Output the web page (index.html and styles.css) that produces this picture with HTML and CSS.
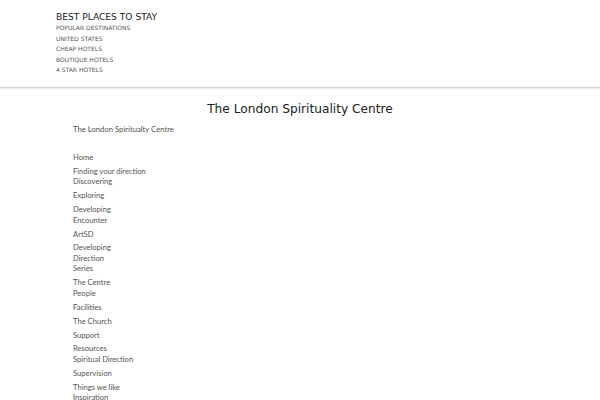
FILE: index.html
```html
<!DOCTYPE html>
<html lang="en">
  <head>
    <meta charset="UTF-8" />
    <meta name="viewport" content="width=device-width, initial-scale=1.0" />
    <title>The London Spirituality Centre</title>
    <link rel="stylesheet" href="styles.css">
  </head>
  <body>
    <header class="topbar">
      <div class="topbar-inner">
        <h3 class="brand">BEST PLACES TO STAY</h3>
        <ul class="top-links">
          <li><a href="#">POPULAR DESTINATIONS</a></li>
          <li><a href="#">UNITED STATES</a></li>
          <li><a href="#">CHEAP HOTELS</a></li>
          <li><a href="#">BOUTIQUE HOTELS</a></li>
          <li><a href="#">4 STAR HOTELS</a></li>
        </ul>
      </div>
    </header>
    <main class="container">
      <h1 class="title">The London Spirituality Centre</h1>
      <p class="site-name">The London Spiritualty Centre</p>
      <ul class="menu">
        <li><a href="#">Home</a></li>
        <li><a href="#">Finding your direction</a><a href="#">Discovering</a></li>
        <li><a href="#">Exploring</a></li>
        <li><a href="#">Developing</a><a href="#">Encounter</a></li>
        <li><a href="#">ArtSD</a></li>
        <li><a href="#">Developing</a><a href="#">Direction</a><a href="#">Series</a></li>
        <li><a href="#">The Centre</a><a href="#">People</a></li>
        <li><a href="#">Facilities</a></li>
        <li><a href="#">The Church</a></li>
        <li><a href="#">Support</a></li>
        <li><a href="#">Resources</a><a href="#">Spiritual Direction</a></li>
        <li><a href="#">Supervision</a></li>
        <li><a href="#">Things we like</a><a href="#">Inspiration</a></li>
      </ul>
    </main>
  </body>
</html>
```

FILE: styles.css
```css
body {
  margin: 0;
  background: #fff;
  font-family: Lato, "Open Sans", sans-serif;
  color: #555;
}
a {
  color: inherit;
  text-decoration: none;
}
ul {
  list-style: none;
  margin: 0;
  padding: 0;
}

.topbar {
  border-bottom: 1px solid #d2d2d2;
  box-shadow: 0 1px 1px rgba(0, 0, 0, 0.07);
  padding: 12px 0 11px;
}
.topbar-inner {
  padding-left: 56px;
}
.brand {
  margin: 0;
  font-family: "DejaVu Sans", sans-serif;
  font-weight: normal;
  font-size: 9.1px;
  line-height: 11px;
  color: #222;
}
.top-links li {
  font-family: "DejaVu Sans", sans-serif;
  font-size: 6px;
  line-height: 10.5px;
  color: #555;
}

.container {
  padding: 0 73px;
}
.title {
  margin: 13px 0 7px;
  text-align: center;
  font-family: "DejaVu Sans", sans-serif;
  font-weight: normal;
  font-size: 12.2px;
  line-height: 16px;
  color: #222;
}
.site-name {
  margin: 0 0 18.5px;
  font-size: 7.7px;
  line-height: 10px;
}
.menu li {
  display: flex;
  flex-direction: column;
  font-size: 7.6px;
  line-height: 10.5px;
  margin-bottom: 3.4px;
}
```
